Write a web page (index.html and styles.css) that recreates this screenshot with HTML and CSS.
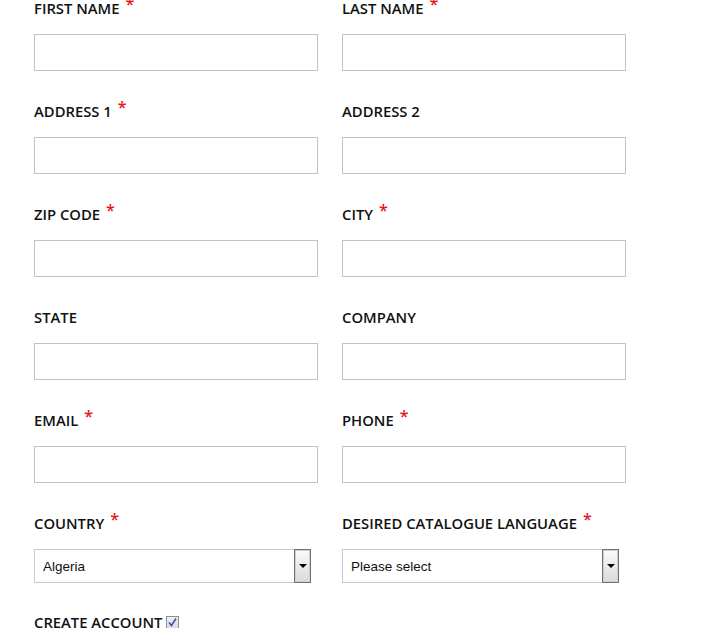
FILE: index.html
```html
<!DOCTYPE html>
<html>
<head>
<meta charset="utf-8">
<link rel="stylesheet" href="styles.css">
</head>
<body>
<form class="form">
  <div class="field"><label>First name<span class="req">*</span></label><input class="text" type="text"></div>
  <div class="field"><label>Last name<span class="req">*</span></label><input class="text" type="text"></div>
  <div class="field"><label>Address 1<span class="req">*</span></label><input class="text" type="text"></div>
  <div class="field"><label>Address 2</label><input class="text" type="text"></div>
  <div class="field"><label>Zip code<span class="req">*</span></label><input class="text" type="text"></div>
  <div class="field"><label>City<span class="req">*</span></label><input class="text" type="text"></div>
  <div class="field"><label>State</label><input class="text" type="text"></div>
  <div class="field"><label>Company</label><input class="text" type="text"></div>
  <div class="field"><label>Email<span class="req">*</span></label><input class="text" type="text"></div>
  <div class="field"><label>Phone<span class="req">*</span></label><input class="text" type="text"></div>
  <div class="field field-select"><label>Country<span class="req">*</span></label>
    <div class="select"><span class="value">Algeria</span><span class="arrow"><span class="tri"></span></span></div>
  </div>
  <div class="field field-select"><label>Desired catalogue language<span class="req">*</span></label>
    <div class="select"><span class="value">Please select</span><span class="arrow"><span class="tri"></span></span></div>
  </div>
  <div class="field check-field"><label class="check-label">Create account<span class="checkbox"><svg width="11" height="11" viewBox="0 0 11 11"><path d="M2 5.5 L4.5 8.5 L9 1.5" fill="none" stroke="#3b4f9a" stroke-width="1.6"/></svg></span></label></div>
</form>
</body>
</html>
```
FILE: styles.css
```css
body {
  margin: 0;
  background: #fff;
  font-family: "Open Sans", "DejaVu Sans", sans-serif;
  overflow: hidden;
}
.form {
  display: grid;
  grid-template-columns: 284px 284px;
  column-gap: 24px;
  padding-left: 34px;
  margin: 0;
}
.field {
  display: flex;
  flex-direction: column;
  gap: 18px;
  margin-bottom: 32px;
}
.field-select {
  margin-bottom: 31px;
}
label {
  font-size: 14.8px;
  font-weight: 600;
  line-height: 16px;
  color: #111;
  text-transform: uppercase;
  white-space: nowrap;
}
.req {
  color: #e8141b;
  font-size: 16px;
  line-height: 0;
  margin-left: 6px;
  vertical-align: 4px;
}
.text {
  box-sizing: border-box;
  height: 37px;
  width: 284px;
  margin: 0;
  border: 1px solid #bac6cf;
  background: #fff;
  padding: 0 8px;
}
.select {
  box-sizing: border-box;
  display: flex;
  width: 277px;
  height: 34px;
  border: 1px solid #c3cbd2;
  background: #fff;
}
.value {
  flex: 1;
  padding-left: 8px;
  font-family: "Liberation Sans", Arial, sans-serif;
  font-size: 13.5px;
  line-height: 34px;
  color: #111;
}
.arrow {
  box-sizing: border-box;
  width: 17px;
  margin: -1px -1px -1px 0;
  border: 1px solid #707070;
  box-shadow: inset 0 0 0 1px #cfcfcf;
  background: linear-gradient(#fbfbfb, #dadada);
  display: flex;
  align-items: center;
  justify-content: center;
}
.tri {
  width: 0;
  height: 0;
  border-left: 4px solid transparent;
  border-right: 4px solid transparent;
  border-top: 4px solid #000;
}
.check-label {
  display: flex;
  align-items: center;
}
.checkbox {
  box-sizing: border-box;
  display: inline-flex;
  align-items: center;
  justify-content: center;
  width: 13px;
  height: 13px;
  margin-left: 4px;
  border: 1px solid #8e8f8f;
  background: linear-gradient(#eef0f4, #d8dce3);
}
```
